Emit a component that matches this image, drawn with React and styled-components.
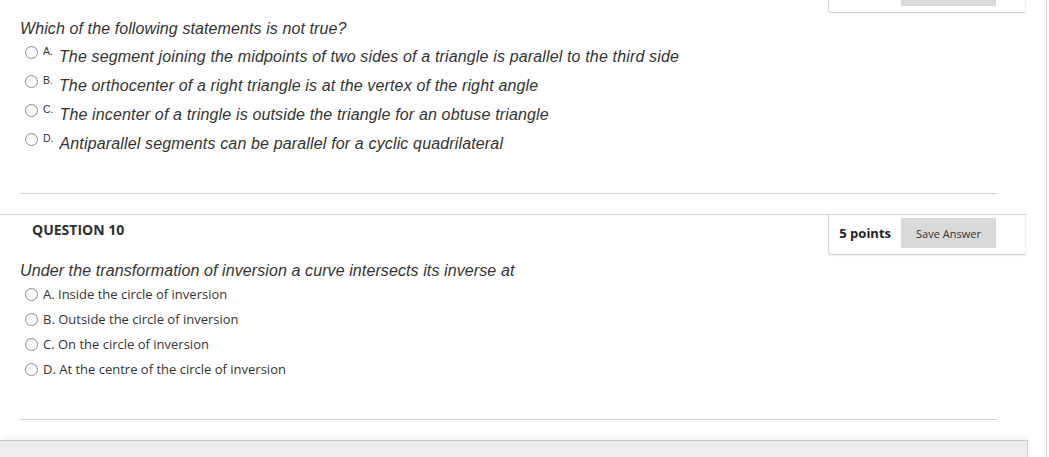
import React from "react";
import styled, { createGlobalStyle } from "styled-components";

const GlobalStyle = createGlobalStyle`
  html, body { margin: 0; padding: 0; background: #fff; }
  body { font-family: "Open Sans", sans-serif; color: #333; overflow: hidden; }
  * { box-sizing: border-box; }
`;

const Viewport = styled.div`
  width: 1049px;
  height: 457px;
  overflow: hidden;
  display: flex;
  background: #fff;
`;

const Main = styled.div`
  width: 1047px;
  flex-shrink: 0;
  border-right: 1px solid #d2d2d2;
  display: flex;
  flex-direction: column;
`;

const Scroller = styled.div`
  margin-top: -28px;
  display: flex;
  flex-direction: column;
`;

const Question = styled.section`
  width: 1026px;
  display: flex;
  flex-direction: column;
  margin-bottom: 20px;
`;

const Header = styled.div`
  display: flex;
  justify-content: space-between;
  align-items: stretch;
  height: 41px;
  border-top: 1px solid #cfcfcf;
`;

const Title = styled.h3`
  margin: 0;
  padding: 5px 0 0 32px;
  font-family: "Open Sans", sans-serif;
  font-weight: 700;
  font-size: 14px;
  line-height: 19px;
  color: #2f2f2f;
`;

const PointsBox = styled.div`
  width: 198px;
  display: flex;
  align-items: flex-start;
  justify-content: flex-end;
  gap: 10px;
  padding: 3px 29px 0 12px;
  border-left: 1px solid #d0d0d0;
  border-bottom: 1px solid #cbcbcb;
  border-right: 1px solid #f0f0f0;
  border-bottom-left-radius: 4px;
  box-shadow: 0 1px 2px rgba(0, 0, 0, 0.05);
`;

const Points = styled.span`
  font-family: "Open Sans", sans-serif;
  font-weight: 700;
  font-size: 13px;
  line-height: 30px;
  color: #222;
  white-space: nowrap;
`;

const SaveButton = styled.button`
  width: 95px;
  height: 30px;
  flex-shrink: 0;
  border: none;
  border-radius: 1px;
  background: #d9d9d9;
  font-family: "Open Sans", sans-serif;
  font-size: 11px;
  color: #333;
  padding: 0;
  cursor: pointer;
`;

const Body = styled.div`
  padding: 7px 29px 0 20px;
  display: flex;
  flex-direction: column;
`;

const Prompt = styled.p`
  margin: 0;
  font-family: "Liberation Sans", Arial, sans-serif;
  font-style: italic;
  font-size: 16px;
  line-height: 18px;
  letter-spacing: 0.1px;
  color: #333;
`;

const Options = styled.ul`
  list-style: none;
  margin: 2px 0 0;
  padding: 0 0 0 5px;
  display: flex;
  flex-direction: column;
`;

const Radio = styled.span`
  width: 13px;
  height: 13px;
  flex-shrink: 0;
  border-radius: 50%;
  border: 1px solid #8c8c8c;
  background: linear-gradient(#f4f4f4, #ffffff);
`;

const RichRow = styled.li`
  height: 29px;
  display: flex;
  align-items: flex-start;
  ${Radio} { margin-top: 6px; }
`;

const Letter = styled.span`
  margin: 5px 6px 0 5px;
  font-family: "Liberation Sans", Arial, sans-serif;
  font-size: 10.5px;
  line-height: 12px;
  color: #333;
`;

const RichText = styled.span`
  margin-top: 8px;
  font-family: "Liberation Sans", Arial, sans-serif;
  font-style: italic;
  font-size: 16px;
  line-height: 18px;
  letter-spacing: 0.15px;
  color: #333;
  white-space: nowrap;
`;

const PlainRow = styled.li`
  height: 25px;
  display: flex;
  align-items: center;
  gap: 5px;
  font-family: "Open Sans", sans-serif;
  font-size: 13px;
  line-height: 25px;
  color: #333;
`;

const Divider = styled.hr`
  margin: 37px 0 0;
  border: none;
  border-top: 1px solid #d0d0d0;
  height: 0;
`;

const Footer = styled.div`
  width: 1028px;
  height: 40px;
  background: #ededed;
  border-top: 1px solid #c8c8c8;
  border-right: 1px solid #cfcfcf;
  box-shadow: 0 -3px 6px rgba(0, 0, 0, 0.06);
`;

const q9 = [
  ["A.", "The segment joining the midpoints of two sides of a triangle is parallel to the third side"],
  ["B.", "The orthocenter of a right triangle is at the vertex of the right angle"],
  ["C.", "The incenter of a tringle is outside the triangle for an obtuse triangle"],
  ["D.", "Antiparallel segments can be parallel for a cyclic quadrilateral"],
];

const q10 = [
  "A. Inside the circle of inversion",
  "B. Outside the circle of inversion",
  "C. On the circle of inversion",
  "D. At the centre of the circle of inversion",
];

/* The previous question's header is scrolled mostly out of view: only the
   bottom of its points box and button show, so its labels are not drawn. */
function QuestionHeader({ title, scrolledAway }) {
  return (
    <Header>
      {scrolledAway ? <span /> : <Title>{title}</Title>}
      <PointsBox>
        {!scrolledAway && <Points>5 points</Points>}
        <SaveButton aria-label="Save Answer">{scrolledAway ? null : "Save Answer"}</SaveButton>
      </PointsBox>
    </Header>
  );
}

export default function App() {
  return (
    <>
      <GlobalStyle />
      <Viewport>
        <Main>
          <Scroller>
            <Question>
              <QuestionHeader title="QUESTION 9" scrolledAway />
              <Body>
                <Prompt>Which of the following statements is not true?</Prompt>
                <Options>
                  {q9.map(([l, t]) => (
                    <RichRow key={l}>
                      <Radio />
                      <Letter>{l}</Letter>
                      <RichText>{t}</RichText>
                    </RichRow>
                  ))}
                </Options>
                <Divider />
              </Body>
            </Question>
            <Question>
              <QuestionHeader title="QUESTION 10" />
              <Body>
                <Prompt>Under the transformation of inversion a curve intersects its inverse at</Prompt>
                <Options>
                  {q10.map((t) => (
                    <PlainRow key={t}>
                      <Radio />
                      <span>{t}</span>
                    </PlainRow>
                  ))}
                </Options>
                <Divider />
              </Body>
            </Question>
            <Footer />
          </Scroller>
        </Main>
      </Viewport>
    </>
  );
}
